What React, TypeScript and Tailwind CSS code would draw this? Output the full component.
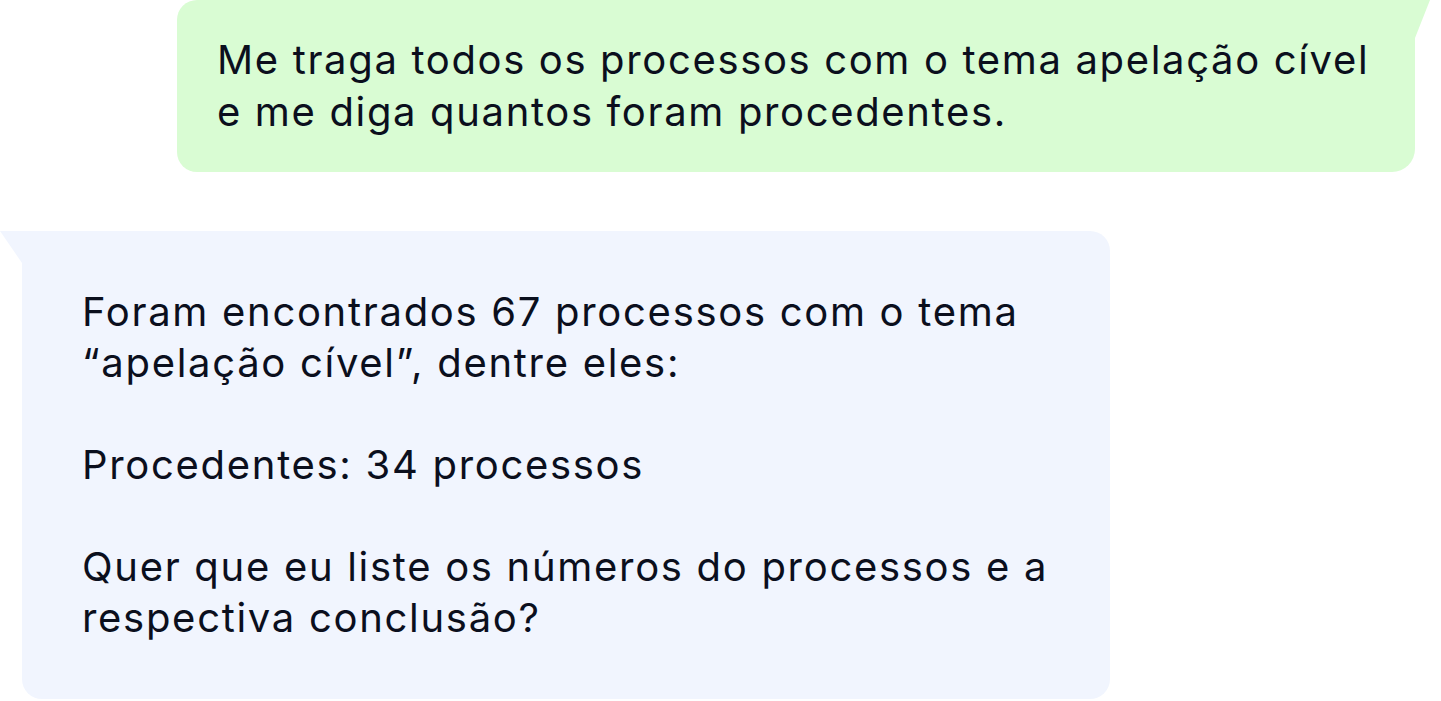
export default function App() {
  return (
    <div className="h-[701px] w-full bg-white font-['Inter',sans-serif] text-[#0b0f1d]">
      {/* user message */}
      <div className="flex justify-end pr-[26px]">
        <div className="relative h-[172px] w-[1238px] rounded-l-[20px] rounded-br-[23px] bg-[#d9fcd3] pl-[40px] pt-[34px]">
          <p className="text-[40px] leading-[52px] tracking-[1.65px]">
            Me traga todos os processos com o tema apelação cível
            <br />
            e me diga quantos foram procedentes.
          </p>
          <svg className="absolute right-[-15px] top-0" width="15" height="38" viewBox="0 0 15 38">
            <path d="M0 0 H15 L0 38 Z" fill="#d9fcd3" />
          </svg>
        </div>
      </div>

      {/* answer */}
      <div className="mt-[59px] flex pl-[22px]">
        <div className="relative h-[468px] w-[1088px] rounded-b-[20px] rounded-tr-[20px] bg-[#f1f5fe] pl-[60px] pt-[55px]">
          <svg className="absolute left-[-22px] top-0" width="22" height="32" viewBox="0 0 22 32">
            <path d="M0 0 H22 V32 Z" fill="#f1f5fe" />
          </svg>
          <div className="flex flex-col gap-[51px] text-[40px] leading-[51px] tracking-[1.7px]">
            <p>
              Foram encontrados 67 processos com o tema
              <br />
              “apelação cível”, dentre eles:
            </p>
            <p>Procedentes: 34 processos</p>
            <p>
              Quer que eu liste os números do processos e a
              <br />
              respectiva conclusão?
            </p>
          </div>
        </div>
      </div>
    </div>
  )
}
